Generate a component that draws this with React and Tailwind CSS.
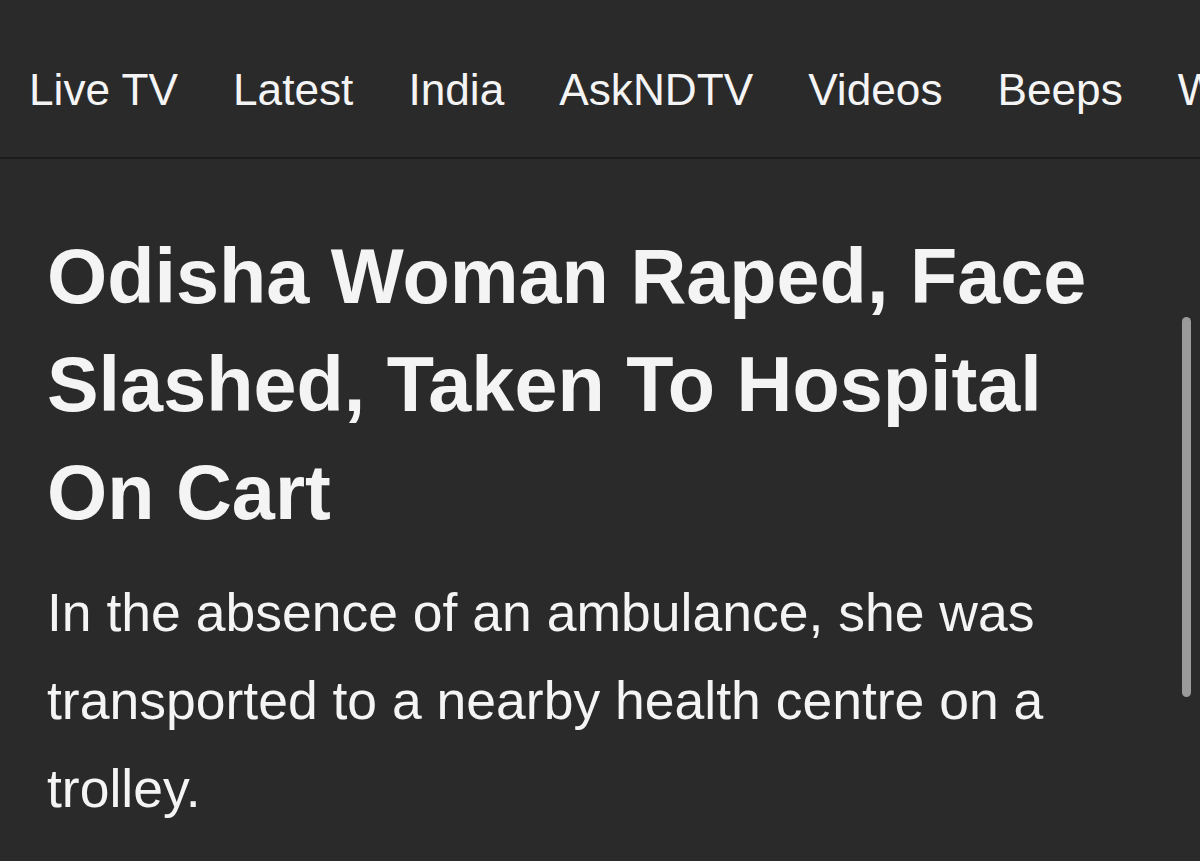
const navItems = ["Live TV", "Latest", "India", "AskNDTV", "Videos", "Beeps", "World", "Cities"];

const App = () => {
  return (
    <div
      className="relative min-h-[861px] w-full overflow-hidden bg-[#2a2a2a] text-[#f4f4f4]"
      style={{ fontFamily: '"Liberation Sans", Arial, sans-serif' }}
    >
      <nav className="h-[159px] border-b-2 border-[#1c1c1c] overflow-hidden">
        <ul className="flex gap-[55px] whitespace-nowrap pl-[29px] pt-[65px] text-[44.2px] leading-[50px]">
          {navItems.map((item) => (
            <li key={item}>{item}</li>
          ))}
        </ul>
      </nav>

      <article className="px-[47px] pt-[63px]">
        <h1 className="max-w-[1100px] text-[77.4px] font-bold leading-[108px]">
          Odisha Woman Raped, Face Slashed, Taken To Hospital On Cart
        </h1>
        <p className="mt-[23px] max-w-[1080px] text-[53.5px] leading-[88px]">
          In the absence of an ambulance, she was transported to a nearby health centre on a trolley.
        </p>
      </article>

      {/* scroll thumb */}
      <div className="absolute left-[1182px] top-[317px] h-[380px] w-[9px] rounded-full bg-[#9a9a9a]" />
    </div>
  );
};

export default App;
